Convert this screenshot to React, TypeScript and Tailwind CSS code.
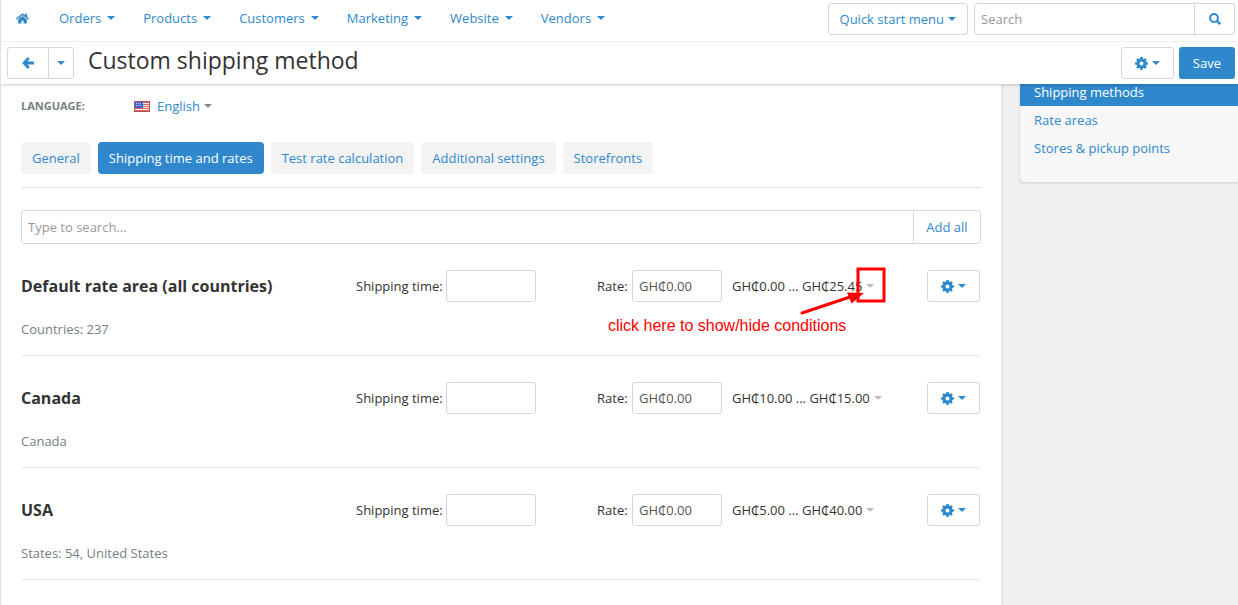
import * as React from 'react'
import { FaHome } from 'react-icons/fa'

type Area = {
  id: string
  name: string
  details: string
  range: string
}

const menu = ['Orders', 'Products', 'Customers', 'Marketing', 'Website', 'Vendors']

const tabs = [
  'General',
  'Shipping time and rates',
  'Test rate calculation',
  'Additional settings',
  'Storefronts',
]

const areas: Area[] = [
  {
    id: 'default',
    name: 'Default rate area (all countries)',
    details: 'Countries: 237',
    range: 'GH₵0.00 ... GH₵25.45',
  },
  {
    id: 'canada',
    name: 'Canada',
    details: 'Canada',
    range: 'GH₵10.00 ... GH₵15.00',
  },
  {
    id: 'usa',
    name: 'USA',
    details: 'States: 54, United States',
    range: 'GH₵5.00 ... GH₵40.00',
  },
]

function Caret({ className = '' }: { className?: string }) {
  return (
    <svg
      aria-hidden="true"
      className={`h-1 w-2 shrink-0 ${className}`}
      viewBox="0 0 8 4"
    >
      <path d="M0 0h8L4 4z" fill="currentColor" />
    </svg>
  )
}

function ArrowIcon() {
  return (
    <svg aria-hidden="true" className="h-3 w-3" viewBox="0 0 12 12">
      <path
        d="M6.800 1L2 6l4.800 5M2.500 6H12"
        fill="none"
        stroke="currentColor"
        strokeWidth="2.800"
      />
    </svg>
  )
}

function GearIcon() {
  return (
    <svg aria-hidden="true" className="h-[13px] w-[13px]" viewBox="-6.5 -6.5 13 13">
      <circle r="3.5" fill="none" stroke="currentColor" strokeWidth="3" />
      <g fill="currentColor">
        {[0, 45, 90, 135].map(angle => (
          <g key={angle} transform={`rotate(${angle})`}>
            <rect x="-1.3" y="-6.4" width="2.6" height="2.6" rx="0.3" />
            <rect x="-1.3" y="3.8" width="2.6" height="2.6" rx="0.3" />
          </g>
        ))}
      </g>
    </svg>
  )
}

function SearchIcon() {
  return (
    <svg aria-hidden="true" className="h-3 w-3" viewBox="0 0 12 12">
      <circle cx="5" cy="5" r="3.900" fill="none" stroke="currentColor" strokeWidth="2" />
      <path d="M8 8l3.200 3.200" stroke="currentColor" strokeWidth="2.400" />
    </svg>
  )
}

function Flag() {
  return (
    <svg aria-hidden="true" className="h-[11px] w-4" viewBox="0 0 16 11">
      <rect width="16" height="11" fill="#d9605a" />
      <path
        d="M1 2.5h14M1 4.5h14M1 6.5h14M1 8.5h14"
        stroke="#fbeeee"
        strokeWidth="1"
      />
      <rect x="1" y="1" width="8" height="6" fill="#3f63d8" />
      <path
        d="M2 2.5h6M2 4.5h6"
        stroke="#c9d6ff"
        strokeWidth="1"
        strokeDasharray="1 1"
      />
      <rect
        x="0.5"
        y="0.5"
        width="15"
        height="10"
        fill="none"
        stroke="#8c4a52"
        strokeOpacity="0.5"
      />
    </svg>
  )
}

function GearButton({ label }: { label: string }) {
  return (
    <button
      aria-label={label}
      className="flex h-8 w-[53px] items-center justify-center gap-1 rounded-[3px] border border-[#d3d8d9] bg-white text-[#2f88cc]"
    >
      <GearIcon />
      <Caret />
    </button>
  )
}

function AreaRow({ area, children }: { area: Area; children?: React.ReactNode }) {
  return (
    <li className="relative border-b border-[#e9ecec] pt-[26px] pb-4">
      <div className="grid grid-cols-[335fr_241fr_330fr_53px] items-center pr-px">
        <h2 className="text-base font-bold whitespace-nowrap">{area.name}</h2>
        <div className="flex items-center">
          <label className="w-[90px] whitespace-nowrap" htmlFor={`${area.id}-time`}>
            Shipping time:
          </label>
          <input
            className="h-8 w-[90px] rounded-[3px] border border-[#d3d8d9] bg-white px-1.5"
            id={`${area.id}-time`}
            type="text"
          />
        </div>
        <div className="flex items-center">
          <label className="w-[35px]" htmlFor={`${area.id}-rate`}>
            Rate:
          </label>
          <input
            className="h-8 w-[90px] rounded-[3px] border border-[#d3d8d9] bg-white px-1.5 text-[#555]"
            defaultValue="GH₵0.00"
            id={`${area.id}-rate`}
            type="text"
          />
          <button className="ml-2.5 flex items-center gap-1 whitespace-nowrap">
            {area.range}
            <Caret className="text-[#bbb]" />
          </button>
        </div>
        <GearButton label={`${area.name} settings`} />
      </div>
      <p className="mt-[17px] text-[#777f80]">{area.details}</p>
      {children}
    </li>
  )
}

function Hint() {
  return (
    <div className="pointer-events-none absolute top-[22px] right-[95px] w-[278px] text-[#ff0000]">
      <svg
        aria-hidden="true"
        className="ml-auto h-[50px] w-[86px]"
        viewBox="0 0 86 50"
      >
        <rect
          x="58"
          y="3"
          width="26"
          height="32"
          fill="none"
          stroke="currentColor"
          strokeWidth="3"
        />
        <path d="M2 47l48-16" stroke="currentColor" strokeWidth="3" strokeLinecap="round" />
        <path d="M64 27l-17-0.500l4.500 11z" fill="currentColor" />
      </svg>
      <p className="font-['Liberation_Sans',sans-serif] text-base leading-5 whitespace-nowrap">
        click here to show/hide conditions
      </p>
    </div>
  )
}

export default function App() {
  const [tab, setTab] = React.useState('Shipping time and rates')

  return (
    <div className="flex h-screen flex-col overflow-hidden border-l border-[#dfe2e3] bg-[#eef0f1] font-['Open_Sans','Noto_Sans',sans-serif] text-[13px] leading-5 text-[#333]">
      <header className="relative z-10 bg-white shadow-[0_1px_3px_rgba(0,0,0,0.2)]">
        <div className="flex h-[42px] items-start justify-between border-b border-[#eff1f1] pr-[3px] pl-[15px] text-[#2f88cc]">
          <nav className="flex h-9 items-center gap-7">
            <a aria-label="Home" className="pr-0.5" href="#">
              <FaHome className="h-[13px] w-[13px]" />
            </a>
            {menu.map(item => (
              <a className="flex items-center gap-1.5" href="#" key={item}>
                {item}
                <Caret />
              </a>
            ))}
          </nav>
          <div className="flex gap-1.5 pt-[3px]">
            <button className="flex h-8 items-center gap-1 rounded-[3px] border border-[#d3d8d9] px-[11px]">
              Quick start menu
              <Caret />
            </button>
            <form className="flex h-8 w-[261px] rounded-[3px] border border-[#d3d8d9]">
              <input
                aria-label="Search"
                className="min-w-0 flex-1 px-1.5 placeholder:text-[#999]"
                placeholder="Search"
                type="text"
              />
              <button
                aria-label="Submit search"
                className="flex w-10 items-center justify-center border-l border-[#d3d8d9]"
                type="button"
              >
                <SearchIcon />
              </button>
            </form>
          </div>
        </div>
        <div className="flex h-[42px] items-center justify-between pr-[3px] pl-1.5">
          <div className="flex items-center">
            <div className="flex h-8 rounded-[3px] border border-[#d3d8d9] text-[#2f88cc]">
              <button aria-label="Back" className="flex w-10 items-center justify-center">
                <ArrowIcon />
              </button>
              <button
                aria-label="Recent pages"
                className="flex w-[25px] items-center justify-center border-l border-[#d3d8d9]"
              >
                <Caret />
              </button>
            </div>
            <h1 className="ml-[14px] pb-1.5 text-[23px] leading-7">Custom shipping method</h1>
          </div>
          <div className="flex gap-[5px]">
            <GearButton label="Page settings" />
            <button className="h-8 rounded-[3px] bg-[#2f88cc] px-[14px] text-white">Save</button>
          </div>
        </div>
      </header>

      <div className="flex min-h-0 flex-1">
        <main className="min-w-0 flex-1 border-r border-[#e4e7e8] bg-white px-5 shadow-[0_0_3px_rgba(0,0,0,0.12)]">
          <div className="flex items-center pt-3">
            <span className="w-[113px] text-[11px] font-bold text-[#777f80]">LANGUAGE:</span>
            <button className="flex items-center">
              <Flag />
              <span className="ml-[7px] text-[#2f88cc]">English</span>
              <Caret className="ml-1 text-[#888]" />
            </button>
          </div>

          <div className="mt-[26px] flex gap-[7px] border-b border-[#dee2e3] pb-[13px]" role="tablist">
            {tabs.map(item => (
              <button
                aria-selected={item === tab}
                className={`h-8 rounded-[4px] px-[11px] whitespace-nowrap ${
                  item === tab ? 'bg-[#2f88cc] text-white' : 'bg-[#f3f3f4] text-[#2f88cc]'
                }`}
                key={item}
                onClick={() => setTab(item)}
                role="tab"
              >
                {item}
              </button>
            ))}
          </div>

          <div className="mt-[22px] flex h-[34px] rounded-[3px] border border-[#d3d8d9]">
            <input
              aria-label="Find rate area"
              className="min-w-0 flex-1 px-1.5 placeholder:text-[#999]"
              placeholder="Type to search..."
              type="text"
            />
            <button className="w-[67px] border-l border-[#d3d8d9] text-[#2f88cc]">Add all</button>
          </div>

          <ul>
            {areas.map(area => (
              <AreaRow area={area} key={area.id}>
                {area.id === 'default' && <Hint />}
              </AreaRow>
            ))}
          </ul>
        </main>

        <aside className="w-[236px] shrink-0 pl-[18px]">
          <nav className="flex flex-col rounded-bl-[4px] bg-[#f7f7f8] pb-5 text-[#2f88cc] shadow-[0_1px_3px_rgba(0,0,0,0.15)]">
            <a className="bg-[#2f88cc] px-[14px] pb-1.5 leading-4 text-white" href="#">
              Shipping methods
            </a>
            <a className="px-[14px] py-1" href="#">
              Rate areas
            </a>
            <a className="px-[14px] py-1" href="#">
              Stores &amp; pickup points
            </a>
          </nav>
        </aside>
      </div>
    </div>
  )
}
